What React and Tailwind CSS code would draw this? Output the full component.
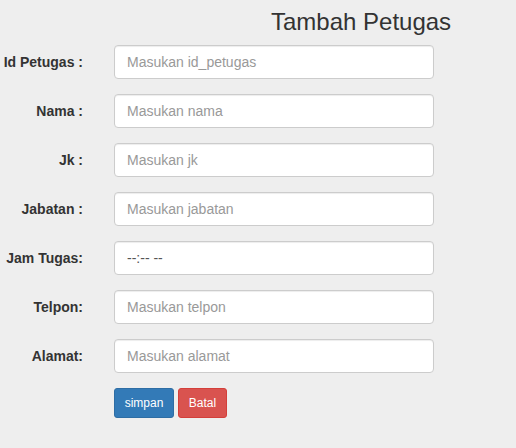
import React from "react";

const rows = [
  { label: "Id Petugas :", ph: "Masukan id_petugas" },
  { label: "Nama :", ph: "Masukan nama" },
  { label: "Jk :", ph: "Masukan jk" },
  { label: "Jabatan :", ph: "Masukan jabatan" },
  { label: "Jam Tugas:", value: "--:-- --" },
  { label: "Telpon:", ph: "Masukan telpon" },
  { label: "Alamat:", ph: "Masukan alamat" },
];

export default function App() {
  return (
    <div
      className="w-[516px] h-[448px] bg-[#eeeeee] text-[#333333] overflow-hidden"
      style={{ fontFamily: '"Liberation Sans", Arial, sans-serif' }}
    >
      <h3 className="pt-[9px] pl-[271px] text-[24px] leading-[26.4px] font-normal text-[#333333] whitespace-nowrap">
        Tambah Petugas
      </h3>
      <div className="mt-[10px] flex flex-col gap-[15px]">
        {rows.map((r) => (
          <div key={r.label} className="flex items-start">
            <label className="w-[83px] pt-[7px] text-right text-[14px] leading-[20px] font-bold text-[#333333] whitespace-nowrap">
              {r.label}
            </label>
            <input
              type="text"
              readOnly
              placeholder={r.ph}
              defaultValue={r.value}
              className="ml-[31px] w-[320px] h-[34px] px-[12px] py-[6px] text-[14px] leading-[20px] bg-white border border-[#cccccc] rounded-[4px] shadow-[inset_0_1px_1px_rgba(0,0,0,0.075)] text-[#555555] placeholder:text-[#999999] outline-none"
            />
          </div>
        ))}
        <div className="flex gap-[4px] pl-[114px]">
          <button className="w-[60px] h-[30px] text-[12px] leading-[18px] text-white bg-[#337ab7] border border-[#2e6da4] rounded-[3px]">
            simpan
          </button>
          <button className="w-[49px] h-[30px] text-[12px] leading-[18px] text-white bg-[#d9534f] border border-[#d43f3a] rounded-[3px]">
            Batal
          </button>
        </div>
      </div>
    </div>
  );
}
